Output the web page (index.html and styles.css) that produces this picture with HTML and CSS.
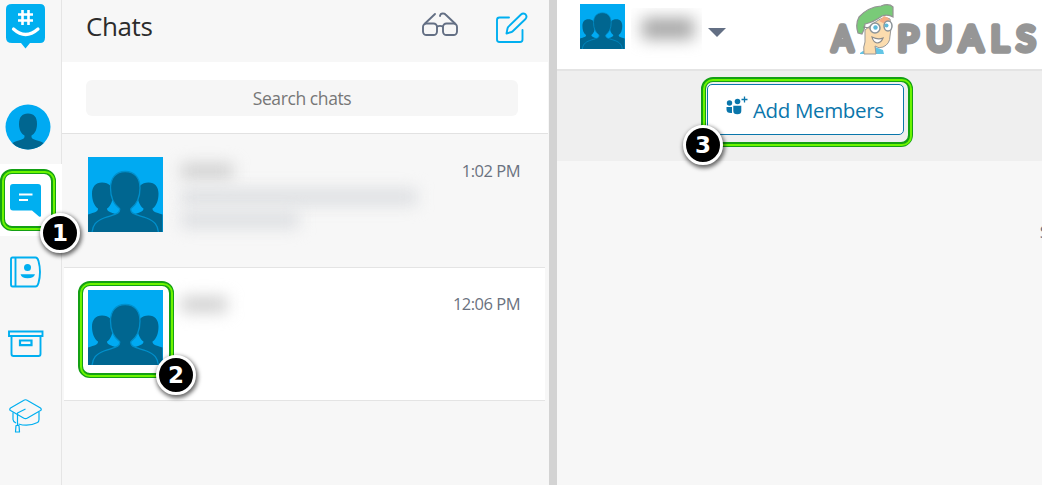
FILE: index.html
```
<!DOCTYPE html>
<html lang="en">
<head>
  <meta charset="UTF-8">
  <meta name="viewport" content="width=device-width, initial-scale=1.0">
  <title>Chats</title>
  <link rel="stylesheet" href="styles.css">
</head>
<body>
  <svg class="defs" width="0" height="0">
    <symbol id="group" viewBox="0 0 75 75">
      <rect width="75" height="75" fill="#00aaf2"/>
      <g id="side" fill="#006690">
        <path d="M14 25.500C7.500 25.500 4 30 4 36.500C4 43 6 49 10 51.500C10 55 7 55 0 57.500V75H32V58C24 56 19 55 19 51.500C23 49 25 43 25 36.500C25 30 21 25.500 14 25.500Z"/>
      </g>
      <use href="#side" transform="translate(74.500 0) scale(-1 1)"/>
      <path d="M37.200 14.500C27.500 14.500 22.500 21.500 22.500 31C22.500 41 26 47.500 31.500 51.500C33 57 26 57.500 16 61C8 64 4.500 68 4 76H70.500C70 68 66.500 64 58.500 61C48.500 57.500 41.500 57 43 51.500C48.500 47.500 52 41 52 31C52 21.500 47 14.500 37.200 14.500Z" fill="#006690" stroke="#0090cc" stroke-width="1.300"/>
    </symbol>
  </svg>
  <div class="app">
    <nav class="rail">
      <svg class="logo" width="40" height="46" viewBox="0 0 40 46">
        <path d="M6 0H34Q39 0 39 5V33.500Q39 39 34 39H24L19.500 44.500L15 39H6Q0 39 0 33.500V5Q0 0 6 0Z" fill="#00aff0"/>
        <path d="M16.500 6V21M22.500 6V21M12 10.500H27M12 16.500H27" stroke="#fff" stroke-width="2.600" fill="none"/>
        <path d="M7.500 25Q19.500 36 32 25" stroke="#fff" stroke-width="3.200" stroke-linecap="round" fill="none"/>
      </svg>
      <svg class="me" width="46" height="46" viewBox="0 0 46 46">
        <clipPath id="round"><circle cx="23" cy="23" r="22.500"/></clipPath>
        <g clip-path="url(#round)">
          <rect width="46" height="46" fill="#00aaf2"/>
          <path d="M23 9.500C17 9.500 14 13 14 20C14 26 16.500 30 19.500 31.500C20 35 17 35.500 12 37C8 38 6 39.500 6 46H40C40 39.500 38 38 34 37C29 35.500 26 35 26.500 31.500C29.500 30 32 26 32 20C32 13 29 9.500 23 9.500Z" fill="#006690"/>
        </g>
      </svg>
      <div class="tab active">
        <svg width="32" height="34" viewBox="0 0 32 34">
          <path d="M3 0H28Q31 0 31 3V31.500Q31 33.500 29 32.500L22 26.500H3Q0 26.500 0 23.500V3Q0 0 3 0Z" fill="#00aff0"/>
          <path d="M9 10.500H22.500M9 16H18" stroke="#fff" stroke-width="2.200"/>
        </svg>
      </div>
      <div class="tab">
        <svg width="36" height="36" viewBox="0 0 36 36" fill="none" stroke="#00aff0" stroke-width="1.900">
          <path d="M5.500 3.500H28.500Q30.500 3.500 31.500 7Q34.500 18 31.500 29Q30.500 32.500 28.500 32.500H5.500Q4 32.500 4 30.500V5.500Q4 3.500 5.500 3.500ZM8.500 3.500V32.500"/>
          <circle cx="20.500" cy="13.500" r="3.500" fill="#00aff0" stroke="none"/>
          <path d="M13.500 20.200H28Q27 24.200 20.500 24.200Q14.500 24.200 13.500 20.200Z" fill="#00aff0" stroke="none"/>
        </svg>
      </div>
      <div class="tab">
        <svg width="37" height="36" viewBox="0 0 37 36" fill="none" stroke="#00aff0" stroke-width="1.900">
          <path d="M2 5.500H35.500V10H2ZM4.500 10V28Q4.500 30 6.500 30H31.500Q33.500 30 33.500 28V10"/>
          <path d="M13 14.500H24.500V19.200H13Z" stroke-width="2.200"/>
        </svg>
      </div>
      <div class="tab">
        <svg width="36" height="36" viewBox="0 0 36 36" fill="none" stroke="#00aff0" stroke-width="1.200" stroke-linejoin="round">
          <path d="M16.500 2.500Q18.500 1 20.500 2.500L33.500 10Q35 11.500 33.500 12.500L20.500 20Q18.500 21.300 16.500 20L3.500 12.500Q2 11.500 3.500 10Z"/>
          <path d="M18.500 11L10.500 15V27.500M6 14.500V21.500Q6 23.500 9 25M11.500 26Q21.500 29 30.500 24.500Q32 23.500 32 21.500V14M9 27.500H12L12.500 34H8.500Z"/>
        </svg>
      </div>
    </nav>

    <section class="chats">
      <header class="chats-head">
        <h1>Chats</h1>
        <svg class="glasses" width="40" height="28" viewBox="0 0 40 28" fill="none" stroke="#636f84" stroke-width="1.900" stroke-linecap="round">
          <rect x="3" y="12.500" width="14" height="11.500" rx="3.500"/>
          <rect x="23" y="12.500" width="14" height="11.500" rx="3.500"/>
          <path d="M17 15.500Q20 14.300 23 15.500M5 12.500L15 3M20 5Q20.500 2 23.500 2.500Q24.500 2.500 25.500 3.500L35 12.500"/>
        </svg>
        <svg class="pen" width="34" height="34" viewBox="0 0 34 34" fill="none" stroke="#00aff0" stroke-width="1.900" stroke-linejoin="round" stroke-linecap="round">
          <path d="M14 6.500H4.500Q2 6.500 2 9V28.500Q2 31 4.500 31H25Q27.500 31 27.500 28.500V19"/>
          <path d="M11.500 22.500L12.500 17.500Q12.700 16.500 13.500 15.700L26 3.500Q28 1.700 30.500 3.300Q32.500 5.500 30.500 8L18 20Q17.300 20.700 16.500 21Z"/>
        </svg>
      </header>
      <div class="search"><div class="search-box">Search chats</div></div>
      <div class="chat">
        <svg width="75" height="75"><use href="#group"/></svg>
        <div class="hidden-text">
          <i class="line name"></i>
          <i class="line long"></i>
          <i class="line short"></i>
        </div>
        <time>1:02 PM</time>
      </div>
      <div class="chat selected">
        <svg width="75" height="75"><use href="#group"/></svg>
        <div class="hidden-text"><i class="line title"></i></div>
        <time>12:06 PM</time>
      </div>
    </section>

    <main class="room">
      <header class="room-head">
        <svg width="45" height="45"><use href="#group"/></svg>
        <div class="room-name"><i class="line"></i></div>
        <svg class="caret" width="18" height="9" viewBox="0 0 18 9"><path d="M0 0H18L9 9Z" fill="#636f84"/></svg>
        <svg class="brand" width="212" height="54" viewBox="0 0 212 54">
          <g font-family="Lato, sans-serif" font-weight="400" font-size="35" fill="#969696" stroke="#969696" stroke-width="5.500" stroke-linejoin="round">
            <text x="3" y="46.500" textLength="21" lengthAdjust="spacingAndGlyphs">A</text>
            <text x="68.500" y="46.500" textLength="138" lengthAdjust="spacing">PUALS</text>
          </g>
          <path d="M31 49L34 47H42L46 43L54 46L55 50H31Z" fill="#62c5e5"/>
          <path d="M36 26Q43 20 48 17Q55 12 61 15Q63 25 61 32Q61 40 54 43Q50 45 46 42L47 50H35Q34 42 36 38Z" fill="#fbdcae" stroke="#999" stroke-width="1"/>
          <path d="M55 12Q62 14 61 20L54 19L50 17Z" fill="#f5ad84"/>
          <path d="M29 29Q26 20 30 13Q39 3 52 2Q60 -1 64 3V13Q59 10 53 12Q45 18 36 20Q36 25 33 30Z" fill="#79ca78" stroke="#939393" stroke-width="1.200"/>
          <circle cx="46" cy="24" r="5" fill="#fff" stroke="#8b9398" stroke-width="1.500"/>
          <ellipse cx="59" cy="22" rx="4" ry="5" fill="#fff" stroke="#8b9398" stroke-width="1.500"/>
          <circle cx="46.500" cy="23.500" r="2.200" fill="#5cb9d8"/>
          <circle cx="57.500" cy="21.500" r="2" fill="#5cb9d8"/>
          <path d="M34 23L41 24M43 33Q49 36 54 34Q52 39 48 39Q44 38 43 33Z" fill="#fff" stroke="#8b8b8b" stroke-width="1.200"/>
        </svg>
      </header>
      <div class="members">
        <button class="add">
          <svg width="24" height="22" viewBox="0 0 24 22" fill="#0a76ab">
            <circle cx="3.500" cy="7" r="2.700"/>
            <circle cx="11.500" cy="5.500" r="2.800"/>
            <path d="M0.500 11H6V17Q0.500 17.500 0.500 13.500ZM7.300 9.700H15.300V15Q15.300 18.300 11.300 18.300Q7.300 18.300 7.300 15Z"/>
            <path d="M18.500 0.500V6.500M15.500 3.500H21.500" stroke="#0a76ab" stroke-width="1.300"/>
          </svg>
          <span>Add Members</span>
        </button>
      </div>
      <div class="messages"><span>S</span></div>
    </main>
  </div>

  <!-- step markers over the page -->
  <div class="frame frame-1"></div>
  <div class="frame frame-2"></div>
  <div class="frame frame-3"></div>
  <div class="step step-1">1</div>
  <div class="step step-2">2</div>
  <div class="step step-3">3</div>
</body>
</html>
```
FILE: styles.css
```
* {
  margin: 0;
  padding: 0;
  box-sizing: border-box;
}
body {
  position: relative;
  width: 1042px;
  height: 485px;
  overflow: hidden;
  background: #f7f7f7;
  font-family: "Open Sans", "Noto Sans", sans-serif;
}
svg {
  display: block;
  flex: none;
}
.defs {
  position: absolute;
}
.app {
  display: flex;
  height: 485px;
}

.rail {
  width: 62px;
  border-right: 1px solid #e5e5e5;
  flex: none;
}
.logo {
  margin: 4px 0 0 6px;
}
.me {
  margin: 54px 0 0 5px;
}
.tab {
  height: 72px;
  padding: 18px 0 0 7px;
}
.tab.active {
  margin: 14px -1px 0 0;
  padding: 20px 0 0 10px;
  background: #fff;
}

.chats {
  width: 487px;
  flex: none;
}
.chats-head {
  display: flex;
  height: 62px;
  padding-left: 24px;
}
h1 {
  width: 334px;
  padding-top: 8px;
  font-size: 26px;
  line-height: 36px;
  font-weight: 400;
  letter-spacing: -0.4px;
  color: #2c2c2c;
}
.glasses {
  margin-top: 11px;
}
.pen {
  margin: 11px 0 0 35px;
}
.search {
  height: 72px;
  margin-right: 1px;
  padding: 18px 30px 0 24px;
  background: #fff;
  border-bottom: 1px solid #e2e2e2;
}
.search-box {
  height: 36px;
  border-radius: 6px;
  background: #f6f6f6;
  color: #777;
  font-size: 17.5px;
  line-height: 37px;
  letter-spacing: -0.4px;
  text-align: center;
}
.chat {
  display: flex;
  height: 134px;
  margin: 0 4px 0 2px;
  padding: 23px 25px 0 24px;
  border-bottom: 1px solid #e4e4e4;
}
.chat.selected {
  height: 133px;
  padding-top: 22px;
  background: #fff;
}
time {
  margin-left: auto;
  padding-top: 2px;
  font-size: 16.5px;
  line-height: 24px;
  letter-spacing: -0.5px;
  color: #6a7280;
}
.hidden-text {
  padding: 7px 0 0 18px;
}
.line {
  display: block;
  filter: blur(8px);
}
.name {
  width: 52px;
  height: 14px;
  background: #ccc;
}
.long {
  width: 236px;
  height: 16px;
  margin-top: 11px;
  background: #dcdee1;
}
.short {
  width: 118px;
  height: 16px;
  margin-top: 7px;
  background: #dcdee1;
}
.title {
  width: 46px;
  height: 15px;
  background: #ccc;
}

.room {
  flex: 1;
  min-width: 0;
  border-left: 8px solid #d3d3d3;
}
.room-head {
  display: flex;
  height: 71px;
  padding: 4px 0 0 23px;
  background: #fff;
  border-bottom: 2px solid #e4e4e4;
}
.room-name {
  width: 71px;
  height: 50px;
  margin: 4px 0 0 6px;
  padding: 10px 8px 0 11px;
  overflow: hidden;
}
.room-name .line {
  height: 21px;
  background: #a6a6a6;
}
.caret {
  margin: 24px 0 0 6px;
}
.brand {
  margin-left: 103px;
}
.members {
  height: 90px;
  padding: 13px 0 0 150px;
  background: #efefef;
}
.add {
  display: flex;
  width: 197px;
  height: 51px;
  padding: 11px 0 0 18px;
  border: 1px solid #0a76ab;
  border-radius: 5px;
  background: #fff;
  color: #0a76ab;
  font: 400 20.5px/28px "Open Sans", sans-serif;
  letter-spacing: -0.35px;
}
.add span {
  margin-left: 3px;
}
.messages {
  display: flex;
  justify-content: flex-end;
  margin-right: -7px;
  padding-top: 59px;
  color: #636f84;
  font-size: 17px;
}

.frame {
  position: absolute;
  border: 5px solid #14a014;
  border-radius: 12px;
}
.frame::after {
  content: "";
  position: absolute;
  inset: -3.5px;
  border: 2px solid #6cf500;
  border-radius: 10px;
}
.frame-1 {
  left: 0;
  top: 169px;
  width: 56px;
  height: 62px;
}
.frame-2 {
  left: 78px;
  top: 281px;
  width: 96px;
  height: 97px;
}
.frame-3 {
  left: 701px;
  top: 77px;
  width: 212px;
  height: 70px;
}
.step {
  position: absolute;
  width: 40px;
  height: 40px;
  border: 3px solid #fff;
  border-radius: 50%;
  background: #000;
  box-shadow: 1px 2px 4px 1px rgba(0, 0, 0, 0.6);
  color: #fff;
  font: bold 23px/34px "DejaVu Sans", sans-serif;
  text-align: center;
}
.step-1 {
  left: 40px;
  top: 213px;
}
.step-2 {
  left: 156px;
  top: 355px;
}
.step-3 {
  left: 683px;
  top: 125px;
}
```
